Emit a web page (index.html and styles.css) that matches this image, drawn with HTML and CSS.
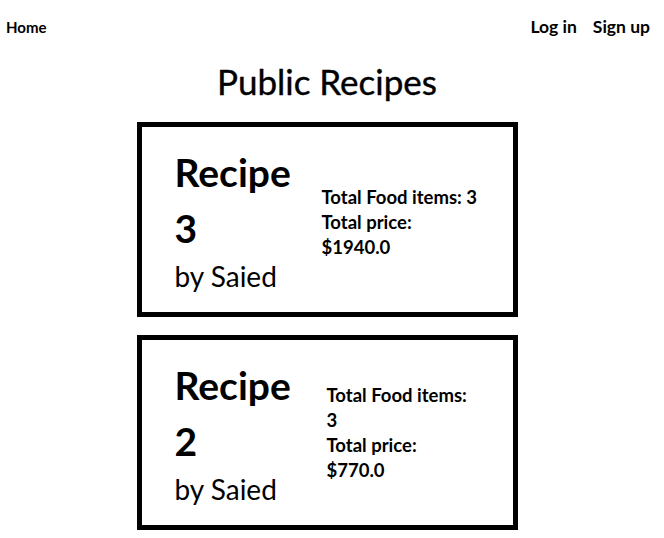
FILE: index.html
```html
<!DOCTYPE html>
<html>
<head>
<meta charset="utf-8">
<link rel="stylesheet" href="styles.css">
</head>
<body>
<nav class="nav">
  <a class="nav-link" href="#">Home</a>
  <div class="nav-right">
    <a class="nav-link nav-link-lg" href="#">Log in</a>
    <a class="nav-link nav-link-lg" href="#">Sign up</a>
  </div>
</nav>
<main class="main">
  <h1 class="title">Public Recipes</h1>
  <section class="card">
    <div class="card-head">
      <h2 class="recipe-name">Recipe<br>3</h2>
      <h3 class="author">by Saied</h3>
    </div>
    <div class="info">
      <p class="info-line">Total Food items: 3</p>
      <p class="info-line">Total price:</p>
      <p class="info-line">$1940.0</p>
    </div>
  </section>
  <section class="card">
    <div class="card-head">
      <h2 class="recipe-name">Recipe<br>2</h2>
      <h3 class="author">by Saied</h3>
    </div>
    <div class="info info-narrow">
      <p class="info-line">Total Food items: 3</p>
      <p class="info-line">Total price:</p>
      <p class="info-line">$770.0</p>
    </div>
  </section>
</main>
</body>
</html>
```
FILE: styles.css
```css
* { box-sizing: border-box; }
html, body { margin: 0; padding: 0; background: #fff; }
body {
  font-family: Lato, "Open Sans", sans-serif;
  color: #000;
}
.nav {
  display: flex;
  justify-content: space-between;
  align-items: baseline;
  padding: 16px 14px 0 6px;
  height: 40px;
}
.nav-right { display: flex; gap: 16px; }
.nav-link {
  color: #000;
  text-decoration: none;
  font-weight: 700;
  font-size: 15px;
}
.nav-link-lg { font-size: 17.5px; }
.main {
  display: flex;
  flex-direction: column;
  align-items: center;
  padding-right: 10px;
}
.title {
  margin: 19px 0 19px;
  font-size: 35px;
  font-weight: 400;
  line-height: 44px;
  -webkit-text-stroke: 0.4px #000;
}
.card {
  width: 381px;
  height: 195px;
  border: 5px solid #000;
  display: flex;
  align-items: center;
  padding-left: 33px;
  margin-bottom: 18px;
}
.card-head { width: 147px; flex: none; }
.recipe-name {
  margin: 0;
  font-size: 39px;
  font-weight: 700;
  line-height: 56px;
}
.author {
  margin: 0;
  font-size: 28px;
  font-weight: 400;
  line-height: 40px;
}
.info { padding-top: 6px; }
.info-narrow { width: 150px; margin-left: 5px; padding-top: 0; }
.info-line {
  margin: 0;
  font-size: 18.5px;
  font-weight: 700;
  line-height: 25px;
}
```
